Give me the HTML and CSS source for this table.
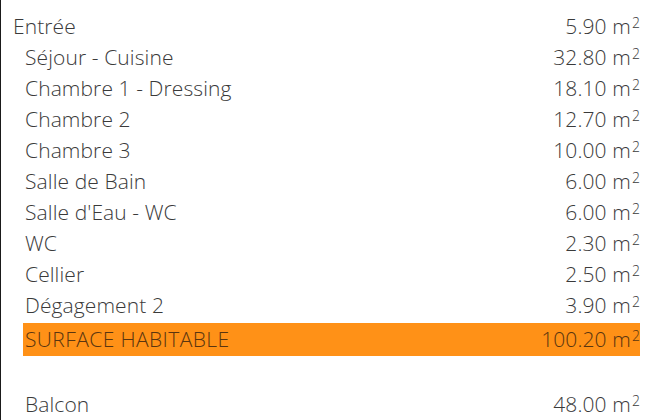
FILE: index.html
```html
<!DOCTYPE html>
<html lang="fr">
<head>
<meta charset="utf-8">
<link rel="stylesheet" href="styles.css">
</head>
<body>
<div class="sheet">
  <div class="row top"><span>Entrée</span><span>5.90 m<sup>2</sup></span></div>
  <div class="row"><span>Séjour - Cuisine</span><span>32.80 m<sup>2</sup></span></div>
  <div class="row"><span>Chambre 1 - Dressing</span><span>18.10 m<sup>2</sup></span></div>
  <div class="row"><span>Chambre 2</span><span>12.70 m<sup>2</sup></span></div>
  <div class="row"><span>Chambre 3</span><span>10.00 m<sup>2</sup></span></div>
  <div class="row"><span>Salle de Bain</span><span>6.00 m<sup>2</sup></span></div>
  <div class="row"><span>Salle d'Eau - WC</span><span>6.00 m<sup>2</sup></span></div>
  <div class="row"><span>WC</span><span>2.30 m<sup>2</sup></span></div>
  <div class="row"><span>Cellier</span><span>2.50 m<sup>2</sup></span></div>
  <div class="row"><span>Dégagement 2</span><span>3.90 m<sup>2</sup></span></div>
  <div class="row total"><span class="caps">SURFACE HABITABLE</span><span>100.20 m<sup>2</sup></span></div>
  <div class="row balcon"><span>Balcon</span><span>48.00 m<sup>2</sup></span></div>
</div>
</body>
</html>
```
FILE: styles.css
```css
html, body {
  margin: 0;
  padding: 0;
  background: #ffffff;
}
.sheet {
  height: 420px;
  box-sizing: border-box;
  border-left: 1px solid #1a1a1a;
  padding: 11px 17px 0 0;
  font-family: "Open Sans", "Noto Sans", sans-serif;
  font-weight: 300;
  font-size: 21px;
  letter-spacing: 0.1px;
  color: #3a3a3a;
}
.row {
  display: flex;
  justify-content: space-between;
  height: 31px;
  line-height: 31px;
  padding-left: 24px;
  white-space: nowrap;
}
.row.top {
  padding-left: 12px;
}
.row sup {
  font-size: 14px;
  line-height: 0;
  vertical-align: 6px;
  margin-left: 1px;
}
.row.total {
  margin-top: 2px;
  margin-left: 22px;
  padding-left: 2px;
  height: 33px;
  line-height: 33px;
  background: #ff9117;
  color: #5a3510;
}
.caps {
  letter-spacing: 0.4px;
}
.row.balcon {
  margin-top: 33px;
}
```
